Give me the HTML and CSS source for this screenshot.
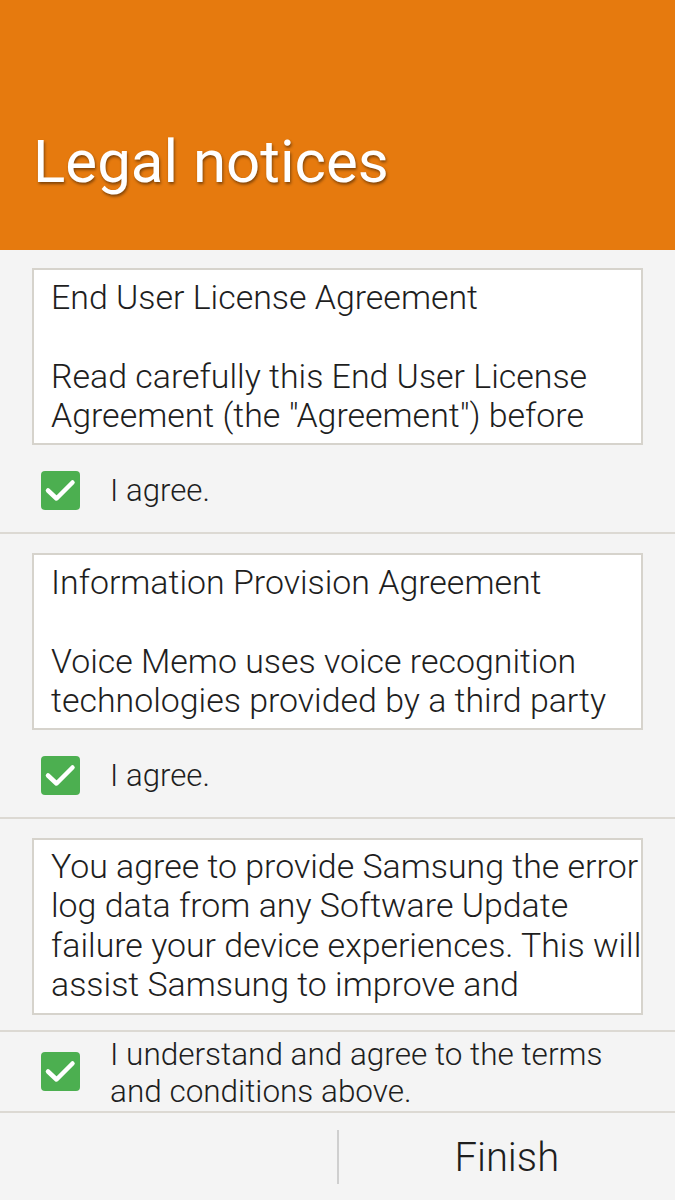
FILE: index.html
```html
<!DOCTYPE html>
<html>
<head>
<meta charset="utf-8">
<link rel="stylesheet" href="styles.css">
</head>
<body>
<header class="appbar"><h1 class="title">Legal notices</h1></header>
<main class="content">
  <section class="section">
    <div class="doc">
      <p>End User License Agreement</p>
      <p class="gap">Read carefully this End User License<br>Agreement (the "Agreement") before</p>
    </div>
    <div class="check-row">
      <span class="check"><svg viewBox="0 0 39 39" width="39" height="39"><polyline points="7,19.5 15.5,27.5 31.5,11.5" fill="none" stroke="#fff" stroke-width="4.5" stroke-linecap="round" stroke-linejoin="round"/></svg></span>
      <span class="check-label">I agree.</span>
    </div>
  </section>
  <section class="section">
    <div class="doc">
      <p>Information Provision Agreement</p>
      <p class="gap">Voice Memo uses voice recognition<br>technologies provided by a third party</p>
    </div>
    <div class="check-row">
      <span class="check"><svg viewBox="0 0 39 39" width="39" height="39"><polyline points="7,19.5 15.5,27.5 31.5,11.5" fill="none" stroke="#fff" stroke-width="4.5" stroke-linecap="round" stroke-linejoin="round"/></svg></span>
      <span class="check-label">I agree.</span>
    </div>
  </section>
  <section class="section last">
    <div class="doc doc-tight">
      <p>You agree to provide Samsung the error<br>log data from any Software Update<br>failure your device experiences. This will<br>assist Samsung to improve and</p>
    </div>
  </section>
  <div class="check-row check-row-wide">
    <span class="check"><svg viewBox="0 0 39 39" width="39" height="39"><polyline points="7,19.5 15.5,27.5 31.5,11.5" fill="none" stroke="#fff" stroke-width="4.5" stroke-linecap="round" stroke-linejoin="round"/></svg></span>
    <span class="check-label two-line">I understand and agree to the terms<br>and conditions above.</span>
  </div>
</main>
<footer class="bottombar">
  <div class="half"></div>
  <div class="sep"></div>
  <div class="half"><span class="finish">Finish</span></div>
</footer>
</body>
</html>
```
FILE: styles.css
```css
* { box-sizing: border-box; }
html, body { margin: 0; padding: 0; }
body {
  width: 675px;
  height: 1200px;
  overflow: hidden;
  background: #f4f4f4;
  font-family: Roboto, "Noto Sans", sans-serif;
  color: #1e1e1e;
  display: flex;
  flex-direction: column;
}
.appbar {
  height: 250px;
  background: #e67a0e;
  display: flex;
  align-items: center;
  padding-left: 33px;
  padding-top: 72px;
}
.title {
  margin: 0;
  font-weight: 400;
  font-size: 60px;
  color: #fff;
  text-shadow: 1px 2px 3px rgba(0, 0, 0, 0.45);
}
.content { flex: 1; }
.section {
  padding-top: 18px;
  border-bottom: 2px solid #dcd9d3;
}
.section + .section { padding-top: 19px; }
.section.last { padding-bottom: 15px; }
.doc {
  margin-left: 32px;
  width: 611px;
  height: 177px;
  overflow: hidden;
  background: #fff;
  border: 2px solid #d6d3cc;
  padding: 8px 0 0 17px;
  font-weight: 300;
  font-size: 33.9px;
  line-height: 39.3px;
  white-space: nowrap;
}
.doc p { margin: 0; }
.doc .gap { margin-top: 39.3px; }
.doc-tight { padding-top: 7px; padding-right: 0; }
.check-row {
  display: flex;
  align-items: center;
  height: 87px;
  padding-left: 41px;
  padding-top: 4px;
}
.check-row-wide {
  height: 81px;
  padding-top: 0;
  border-bottom: 2px solid #dcd9d3;
}
.check {
  width: 39px;
  height: 39px;
  border-radius: 4px;
  background: #4caf50;
  flex: none;
  display: flex;
}
.check-label {
  margin-left: 30px;
  font-weight: 300;
  font-size: 31.2px;
  color: #1e1e1e;
}
.two-line {
  font-size: 31.5px;
  line-height: 37px;
  white-space: nowrap;
  padding-top: 3px;
}
.bottombar {
  height: 86px;
  display: flex;
  align-items: center;
}
.half {
  flex: 1;
  display: flex;
  justify-content: center;
  align-items: center;
}
.sep {
  width: 2px;
  height: 54px;
  background: #cfcfcf;
}
.finish {
  font-weight: 300;
  font-size: 40px;
  color: #1e1e1e;
}
```
